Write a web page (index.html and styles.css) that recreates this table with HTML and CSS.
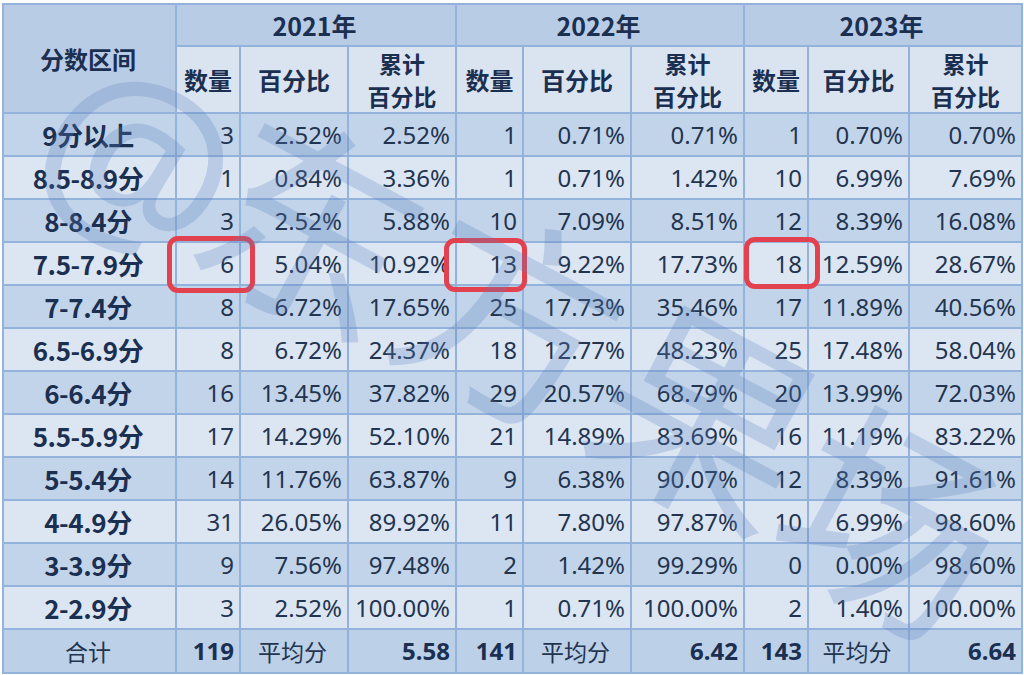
FILE: index.html
```html
<!DOCTYPE html>
<html lang="zh">
<head>
<meta charset="utf-8">
<title>分数区间统计</title>
<link rel="stylesheet" href="styles.css">
</head>
<body>
<div class="wrap">
<table class="stats">
  <colgroup>
    <col class="c-range"><col class="c-n"><col class="c-p"><col class="c-c">
    <col class="c-n2"><col class="c-p"><col class="c-c2">
    <col class="c-n"><col class="c-p3"><col class="c-c3">
  </colgroup>
  <thead>
    <tr class="h1">
      <th rowspan="2" class="range-h">分数区间</th>
      <th colspan="3">2021年</th>
      <th colspan="3">2022年</th>
      <th colspan="3">2023年</th>
    </tr>
    <tr class="h2">
      <th>数量</th><th>百分比</th><th class="cum">累计<br>百分比</th>
      <th>数量</th><th>百分比</th><th class="cum">累计<br>百分比</th>
      <th>数量</th><th>百分比</th><th class="cum">累计<br>百分比</th>
    </tr>
  </thead>
  <tbody>
    <tr class="dark"><th>9分以上</th><td>3</td><td>2.52%</td><td>2.52%</td><td>1</td><td>0.71%</td><td>0.71%</td><td>1</td><td>0.70%</td><td>0.70%</td></tr>
    <tr class="light"><th>8.5-8.9分</th><td>1</td><td>0.84%</td><td>3.36%</td><td>1</td><td>0.71%</td><td>1.42%</td><td>10</td><td>6.99%</td><td>7.69%</td></tr>
    <tr class="dark"><th>8-8.4分</th><td>3</td><td>2.52%</td><td>5.88%</td><td>10</td><td>7.09%</td><td>8.51%</td><td>12</td><td>8.39%</td><td>16.08%</td></tr>
    <tr class="light"><th>7.5-7.9分</th><td class="mark">6<span class="ring ring1"></span></td><td>5.04%</td><td>10.92%</td><td class="mark">13<span class="ring ring2"></span></td><td>9.22%</td><td>17.73%</td><td class="mark">18<span class="ring ring3"></span></td><td>12.59%</td><td>28.67%</td></tr>
    <tr class="dark"><th>7-7.4分</th><td>8</td><td>6.72%</td><td>17.65%</td><td>25</td><td>17.73%</td><td>35.46%</td><td>17</td><td>11.89%</td><td>40.56%</td></tr>
    <tr class="light"><th>6.5-6.9分</th><td>8</td><td>6.72%</td><td>24.37%</td><td>18</td><td>12.77%</td><td>48.23%</td><td>25</td><td>17.48%</td><td>58.04%</td></tr>
    <tr class="dark"><th>6-6.4分</th><td>16</td><td>13.45%</td><td>37.82%</td><td>29</td><td>20.57%</td><td>68.79%</td><td>20</td><td>13.99%</td><td>72.03%</td></tr>
    <tr class="light"><th>5.5-5.9分</th><td>17</td><td>14.29%</td><td>52.10%</td><td>21</td><td>14.89%</td><td>83.69%</td><td>16</td><td>11.19%</td><td>83.22%</td></tr>
    <tr class="dark"><th>5-5.4分</th><td>14</td><td>11.76%</td><td>63.87%</td><td>9</td><td>6.38%</td><td>90.07%</td><td>12</td><td>8.39%</td><td>91.61%</td></tr>
    <tr class="light"><th>4-4.9分</th><td>31</td><td>26.05%</td><td>89.92%</td><td>11</td><td>7.80%</td><td>97.87%</td><td>10</td><td>6.99%</td><td>98.60%</td></tr>
    <tr class="dark"><th>3-3.9分</th><td>9</td><td>7.56%</td><td>97.48%</td><td>2</td><td>1.42%</td><td>99.29%</td><td>0</td><td>0.00%</td><td>98.60%</td></tr>
    <tr class="light"><th>2-2.9分</th><td>3</td><td>2.52%</td><td>100.00%</td><td>1</td><td>0.71%</td><td>100.00%</td><td>2</td><td>1.40%</td><td>100.00%</td></tr>
  </tbody>
  <tfoot>
    <tr class="total">
      <td class="center">合计</td><td class="b">119</td><td class="center">平均分</td><td class="b">5.58</td>
      <td class="b">141</td><td class="center">平均分</td><td class="b">6.42</td>
      <td class="b">143</td><td class="center">平均分</td><td class="b">6.64</td>
    </tr>
  </tfoot>
</table>
<div class="watermark" aria-hidden="true">
  <span class="wm-at">@</span><span class="wm-ch">东</span><span class="wm-ch">方</span><span class="wm-ch">果</span><span class="wm-ch">场</span>
</div>
</div>
</body>
</html>
```

FILE: styles.css
```css
html, body {
  margin: 0;
  padding: 0;
  background: #ffffff;
}
body {
  font-family: "Noto Sans", "Noto Sans CJK SC", sans-serif;
  color: #1d3152;
}
.wrap {
  position: relative;
  width: 1024px;
  height: 675px;
  overflow: hidden;
  padding: 3px 0 0 2px;
  box-sizing: border-box;
}
.stats {
  border-collapse: collapse;
  table-layout: fixed;
  width: 1016px;
  font-size: 24px;
}
.c-range { width: 173px; }
.c-n { width: 64px; }
.c-p { width: 108px; }
.c-c { width: 108px; }
.c-n2 { width: 67px; }
.c-c2 { width: 113px; }
.c-p3 { width: 101px; }
.c-c3 { width: 113px; }

.stats th, .stats td {
  border: 2px solid #93b2dc;
  padding: 0 5px 0 2px;
  white-space: nowrap;
}
.stats th {
  font-family: "Noto Sans CJK SC", "Noto Sans", sans-serif;
  font-weight: 700;
  text-align: center;
  color: #1b2f51;
}
.stats td {
  text-align: right;
  font-weight: 400;
  color: #23344f;
  line-height: 1;
}
.h1 th {
  height: 40px;
  font-size: 25px;
  background: #b9cce5;
  line-height: 1;
}
.h1 th.range-h {
  background: #b9cce5;
  font-size: 24px;
}
.h2 th {
  height: 65px;
  font-size: 24px;
  background: #dae4f1;
  line-height: 31px;
  padding: 0 2px;
}
.h2 th.cum {
  font-size: 23px;
  line-height: 32.5px;
}
tbody th {
  font-size: 26px;
  line-height: 1;
  letter-spacing: -0.4px;
  font-family: "Noto Sans", "Noto Sans CJK SC", sans-serif;
}
tbody tr th, tbody tr td {
  height: 41px;
}
tr.dark th, tr.dark td { background: #c2d4ea; }
tr.light th, tr.light td { background: #dce6f3; }
.total td {
  height: 42px;
  background: #bcd0e8;
}
.total td.center {
  text-align: center;
  font-family: "Noto Sans CJK SC", sans-serif;
  font-size: 23px;
}
.total td.b {
  font-weight: 700;
  color: #1b2f51;
}
td.mark {
  position: relative;
}
.ring {
  position: absolute;
  border: 5px solid #e2424f;
  border-radius: 11px;
}
.ring1 { left: -10px; right: -16px; top: -7px; bottom: -9px; }
.ring2 { left: -13px; right: -5px; top: -5px; bottom: -8px; }
.ring3 { left: -1px; right: -13px; top: -6px; bottom: -5px; }

.watermark {
  position: absolute;
  left: 0;
  top: 0;
  width: 1024px;
  height: 675px;
  pointer-events: none;
  font-family: "Noto Sans CJK SC", sans-serif;
  font-weight: 400;
  color: rgba(88, 128, 188, 0.26);
}
.watermark span {
  position: absolute;
  font-size: 215px;
  line-height: 1;
  transform: rotate(28deg);
  transform-origin: center;
}
.wm-at { left: 45px; top: 45px; font-family: "Noto Sans", sans-serif; }
.wm-ch:nth-child(2) { left: 210px; top: 110px; }
.wm-ch:nth-child(3) { left: 410px; top: 200px; }
.wm-ch:nth-child(4) { left: 605px; top: 300px; }
.wm-ch:nth-child(5) { left: 790px; top: 405px; }
```
